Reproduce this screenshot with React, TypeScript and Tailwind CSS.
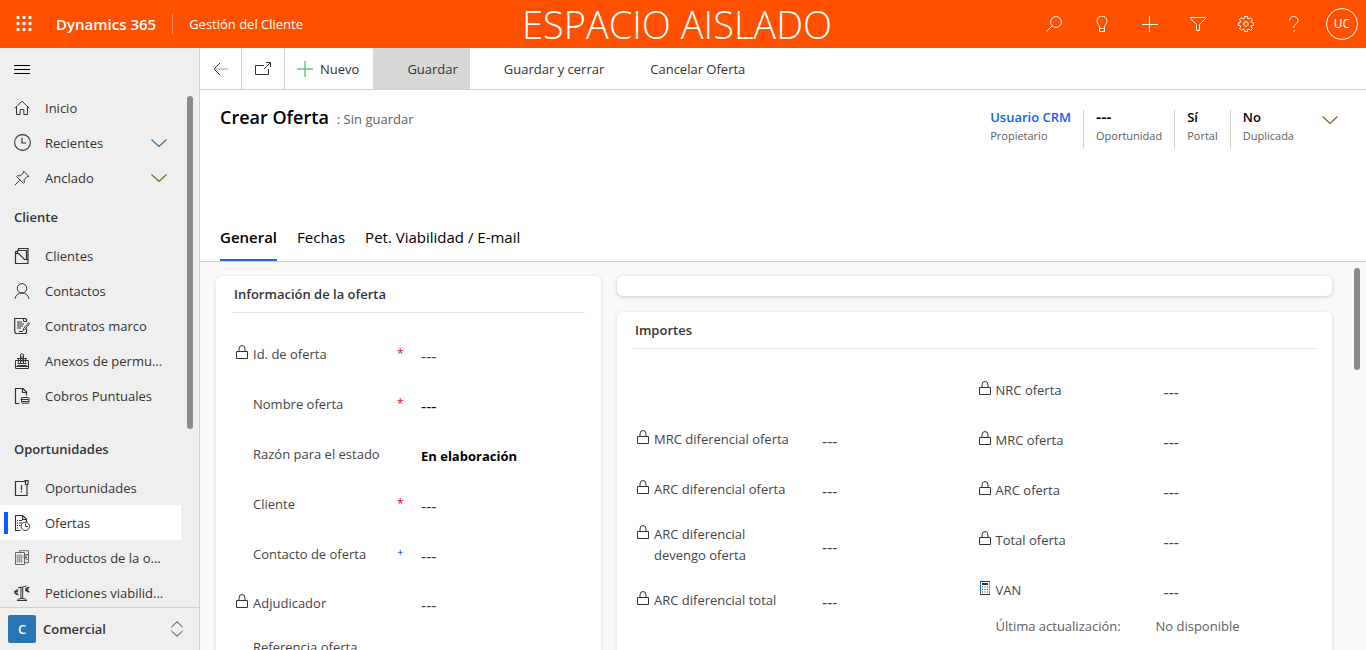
import React, { useId, useState } from "react";

type IconProps = { className?: string; children: React.ReactNode; box?: string };

function Svg({ className = "size-4", children, box = "0 0 16 16" }: IconProps) {
  return (
    <svg
      className={`${className} shrink-0`}
      viewBox={box}
      fill="none"
      stroke="currentColor"
      strokeWidth="1"
      aria-hidden="true"
    >
      {children}
    </svg>
  );
}

const Chevron = ({ className = "w-4 h-2" }: { className?: string }) => (
  <Svg className={className} box="0 0 16 8">
    <path d="M.5.5 8 7.500 15.500.5" strokeWidth="1.200" />
  </Svg>
);

const LockIcon = () => (
  <Svg className="h-[15px] w-3" box="0 0 12 15">
    <path d="M.5 6.500h11v7H.5z M3 6.500V4a3 3.500 0 0 1 6 0v2.500" />
  </Svg>
);

const CalculatorIcon = () => (
  <Svg className="h-[15px] w-3" box="0 0 12 15">
    <path d="M1.500 .5v13" stroke="#1479b8" />
    <path d="M10.500 .5v13" stroke="#c98a4b" />
    <path d="M1 .5h10M1 13.500h10" />
    <path d="M3 3h6" strokeWidth="2" />
    <path d="M3 6h1M5.500 6h1M8 6h1M3 8.500h1M5.500 8.500h1M8 8.500h1M3 11h1M5.500 11h1M8 11h1" strokeWidth="1" />
  </Svg>
);

const icons = {
  home: (
    <Svg>
      <path d="M.7 8.300 8 1.200l7.300 7.100M2.500 7v7.500h3.700V9.500h3.600v5h3.700V7" />
    </Svg>
  ),
  clock: (
    <Svg className="size-[17px]">
      <circle cx="8" cy="8" r="7.400" />
      <path d="M7.500 3.500v5h4" />
    </Svg>
  ),
  pin: (
    <Svg>
      <path d="M.8 15.200 5.700 10.300M9.700 1.200l5.100 5.100-1.700.4-3 3 .3 2.600-1 1L2.700 6.600l1-1 2.600.3 3-3z" />
    </Svg>
  ),
  folder: (
    <Svg>
      <path d="M1.500 5.500h3l6 6h3.500v4H1.500zM1.500 5.500v-2h1.500M3.500 5V2.500h9v9M4.500 2.500V.5h9.500v11" strokeWidth="1.200" />
    </Svg>
  ),
  person: (
    <Svg>
      <circle cx="8" cy="5.300" r="4.700" />
      <path d="M1 15.800C1.700 12 4.500 10 8 10s6.300 2 7 5.800" />
    </Svg>
  ),
  contract: (
    <Svg>
      <path d="M12.500 4V1.500l-1-1H.7v13l1 2h9.800l1-1v-4" strokeWidth="1.200" />
      <path d="M3 4h5M3 6h7M3 8h6M3 10h4M5 13.500h4M9.500.5v3h3" />
      <path d="m14.800 4.500-5.300 6-.5 1.800 1.700-.7 5-6.100z" />
    </Svg>
  ),
  annex: (
    <Svg>
      <path d="M1.500 7.500h13v8h-13z" />
      <path d="M4.500 9.500V5.500M11.500 9.500V5.500M6.500 10V1.500Q8 0 9.500 1.500V10M8 3v6M3.500 10.500h9M3.500 12.500h9" />
      <path d="M3 5.500h10M1.500 13.500h13" />
    </Svg>
  ),
  receipt: (
    <Svg>
      <path d="M5.500 15.500h-4V.5h7.500l3.500 3.500v3.500M8.500.5v4h4" strokeWidth="1.200" />
      <path d="M8 9.500h6.500M6.500 11.500h8M7 13.500h8M8 15.200h7M7.500 9.500v5M15 9.500v5" />
    </Svg>
  ),
  opportunity: (
    <Svg>
      <path d="M1.500 1.500h9.500v-1h3v4h-1v11H1.500zM11.500.5v4.500M7.500 5v5M7.500 11v1.300" strokeWidth="1.200" />
    </Svg>
  ),
  offer: (
    <Svg>
      <path d="M6.500 15.500h-5V.5h7l4 3.500v3M8.500.5v4h4" strokeWidth="1.200" />
      <path d="M3 5.500h1M5 5.500h3M3 8h1M5 8h3M3 10.500h1M5 10.500h1.500M3 13h1" />
      <circle cx="11.300" cy="11.300" r="4.200" fill="white" />
      <path d="M11.500 8.500v3H14" />
    </Svg>
  ),
  products: (
    <Svg className="size-4 text-[#666]">
      <path d="M1.500 2.500h9v12h-9zM5.500 2.500V.7h9v12h-4" />
      <path d="M3.500 4.500v8M5.500 4.500v8M7.500 4.500v8" strokeWidth="1.600" opacity=".6" />
      <path d="M14 4.500q-3.500-1-3.500 2t3.500 3M9.500 6h3.500M9.500 7.500h3.500" />
    </Svg>
  ),
  balance: (
    <Svg>
      <path d="M4 2.500q5 0 8.500-1.500M8.700 2v11.500M6.900 2v11.500M3 15.500q1-2 5-2t5 2z" />
      <path d="M4.500 5Q1.500 4.500 1.500 7.200t3 2.300M0 6.500h4M0 8h4M15.500 2.500q-3.200-.5-3.200 2t3.200 2.300M11 3.800h3.500M11 5.300h3.500" strokeWidth="1.200" />
    </Svg>
  ),
};

type NavEntry = { label: string; icon: keyof typeof icons; chevron?: string };

const topEntries: NavEntry[] = [
  { label: "Inicio", icon: "home" },
  { label: "Recientes", icon: "clock", chevron: "text-[#3573a3]" },
  { label: "Anclado", icon: "pin", chevron: "text-[#84612f]" },
];

const clientEntries: NavEntry[] = [
  { label: "Clientes", icon: "folder" },
  { label: "Contactos", icon: "person" },
  { label: "Contratos marco", icon: "contract" },
  { label: "Anexos de permu...", icon: "annex" },
  { label: "Cobros Puntuales", icon: "receipt" },
];

const opportunityEntries: NavEntry[] = [
  { label: "Oportunidades", icon: "opportunity" },
  { label: "Ofertas", icon: "offer" },
  { label: "Productos de la o...", icon: "products" },
  { label: "Peticiones viabilid...", icon: "balance" },
];

function NavList({ entries }: { entries: NavEntry[] }) {
  return (
    <ul>
      {entries.map(({ label, icon, chevron }) => {
        const active = label === "Ofertas";
        return (
          <li key={label}>
            <a
              href="#"
              aria-current={active ? "page" : undefined}
              className={`flex h-[35px] items-center pr-3.5 ${active ? "bg-white" : ""}`}
            >
              <span className={`ml-1 h-[22px] w-1 shrink-0 ${active ? "bg-[#0b5cff]" : ""}`} />
              <span className="ml-1.5 flex w-[31px] shrink-0 text-[#333]">{icons[icon]}</span>
              <span className="grow whitespace-nowrap">{label}</span>
              {chevron && (
                <span className={chevron}>
                  <Chevron />
                </span>
              )}
            </a>
          </li>
        );
      })}
    </ul>
  );
}

function Sidebar() {
  return (
    <aside className="flex w-[200px] shrink-0 flex-col border-r border-[#d2d0ce] bg-[#efefef] text-[#333]">
      <button type="button" aria-label="Menú" className="flex h-[42px] shrink-0 items-center pl-3.5 text-black">
        <Svg>
          <path d="M0 4.500h16M0 8.500h16M0 12.500h16" />
        </Svg>
      </button>
      <div className="flex min-h-0 grow">
        <nav className="w-[181px] overflow-hidden">
          <NavList entries={topEntries} />
          <h2 className="flex h-[43px] items-center pl-3.5 font-semibold">Cliente</h2>
          <NavList entries={clientEntries} />
          <h2 className="mt-3.5 flex h-[43px] items-center pl-3.5 font-semibold">Oportunidades</h2>
          <NavList entries={opportunityEntries} />
        </nav>
        <div className="ml-1.5 pt-1.5">
          <div className="h-[333px] w-1.5 rounded-full bg-[#8a8a8a]" />
        </div>
      </div>
      <button type="button" className="flex h-[43px] shrink-0 items-center border-t border-[#d2d0ce] pr-4 pl-2 font-semibold">
        <span className="flex size-7 items-center justify-center rounded-xs bg-[#2974b2] text-white">C</span>
        <span className="grow pl-[7px] text-left">Comercial</span>
        <Svg className="h-4 w-3" box="0 0 12 16">
          <path d="M.5 6 6 .7 11.500 6M.5 10 6 15.300 11.500 10" />
        </Svg>
      </button>
    </aside>
  );
}

const headerActions: { label: string; icon: React.ReactNode }[] = [
  { label: "Buscar", icon: <Svg><circle cx="10" cy="6" r="5.400" /><path d="M6.200 9.800.4 15.600" /></Svg> },
  {
    label: "Asistente",
    icon: (
      <Svg>
        <path d="M5.500 12.500V11Q5.500 9.500 4.200 8.300A5 5 0 1 1 11.800 8.300Q10.500 9.500 10.500 11v1.500zM5.500 12.500v3h5v-3" />
      </Svg>
    ),
  },
  { label: "Crear", icon: <Svg><path d="M7.500 0v16M0 8.500h16" /></Svg> },
  { label: "Filtro", icon: <Svg><path d="M.5 1.500h15v1L9.500 8.500v6h-3v-6l-6-6z" /></Svg> },
  {
    label: "Configuración",
    icon: (
      <Svg>
        <path d="M6.700.5h2.600l.4 2 1.200.5 1.700-1.200 1.800 1.800-1.200 1.700.5 1.200 1.900.4v2.400l-1.900.4-.5 1.200 1.200 1.700-1.800 1.800-1.700-1.200-1.200.5-.4 1.900H6.700l-.4-1.900-1.200-.5-1.700 1.200-1.800-1.800 1.200-1.700-.5-1.200-1.900-.4V6.900l1.900-.4.500-1.200-1.200-1.700 1.800-1.800L5.100 3l1.200-.5z" />
        <circle cx="8" cy="8" r="2.300" />
      </Svg>
    ),
  },
  {
    label: "Ayuda",
    icon: (
      <Svg>
        <path d="M3.500 4.500a4.300 4 0 1 1 6.800 3.200Q8 9.200 8 10.500v1.500M8 14v1.700" />
      </Svg>
    ),
  },
];

function TopBar() {
  return (
    <header className="flex h-12 shrink-0 items-center bg-[#ff5000] text-white">
      <div className="flex flex-1 items-center">
        <button type="button" aria-label="Iniciador de aplicaciones" className="flex size-12 items-center justify-center">
          <svg className="size-4" viewBox="0 0 16 16" fill="currentColor" aria-hidden="true">
            {[0, 6, 12].flatMap((y) => [0, 6, 12].map((x) => <rect key={`${x}-${y}`} x={x + 0.5} y={y} width="3" height="3" rx="1" />))}
          </svg>
        </button>
        <a href="#" className="border-r border-white/40 pr-4 pl-2 text-[15px] leading-5 font-semibold">
          Dynamics 365
        </a>
        <a href="#" className="pl-4">Gestión del Cliente</a>
      </div>
      <p className="pr-3 text-[38px] leading-12 font-light">ESPACIO AISLADO</p>
      <div className="flex flex-1 justify-end">
        {headerActions.map(({ label, icon }) => (
          <button key={label} type="button" aria-label={label} className="flex size-12 items-center justify-center">
            {icon}
          </button>
        ))}
        <button type="button" className="flex size-12 items-center justify-center">
          <span className="flex size-8 items-center justify-center rounded-full border border-white text-xs">UC</span>
        </button>
      </div>
    </header>
  );
}

function CommandBar() {
  return (
    <div className="flex h-[42px] shrink-0 border-b border-[#d2d0ce] text-[#333]">
      <button type="button" aria-label="Atrás" className="flex w-[42px] items-center justify-center border-r border-[#d2d0ce]">
        <Svg>
          <path d="M7 2 1 8l6 6" />
          <path d="M1.500 8h13.500" stroke="#a19fa8" />
        </Svg>
      </button>
      <button type="button" aria-label="Abrir en ventana nueva" className="flex w-[43px] items-center justify-center border-r border-[#d2d0ce]">
        <Svg>
          <path d="M9 4.500H.5v9h13V8M9 8l6-6M11 1.500h4.500V6" />
        </Svg>
      </button>
      <button type="button" className="flex items-center gap-[7px] pr-3.5 pl-3">
        <Svg className="size-4 text-[#6cc08b]">
          <path d="M8 0v16M0 8h16" strokeWidth="1.500" />
        </Svg>
        Nuevo
      </button>
      <button type="button" className="bg-[#d8d8d8] pr-3 pl-[34px]">Guardar</button>
      <button type="button" className="pr-3 pl-[34px]">Guardar y cerrar</button>
      <button type="button" className="pr-3 pl-[34px]">Cancelar Oferta</button>
    </div>
  );
}

const tabs = ["General", "Fechas", "Pet. Viabilidad / E-mail"];

function FormHeader() {
  const [selected, setSelected] = useState(tabs[0]);
  return (
    <div className="flex shrink-0 flex-col border-b border-[#d2d0ce] pl-5">
      <div className="flex h-[125px] items-start justify-between pt-5 pr-7">
        <div className="flex items-baseline gap-2 leading-[14px]">
          <h1 className="text-lg leading-[14px] font-semibold text-black">Crear Oferta</h1>
          <span className="text-[#605e5c]">: Sin guardar</span>
        </div>
        <div className="flex">
          <dl className="flex divide-x divide-[#d2d0ce] text-black">
            <HeaderField label="Propietario">
              <a href="#" className="text-[#1160f7]">Usuario CRM</a>
            </HeaderField>
            <HeaderField label="Oportunidad">---</HeaderField>
            <HeaderField label="Portal">Sí</HeaderField>
            <HeaderField label="Duplicada">No</HeaderField>
          </dl>
          <button type="button" aria-label="Más campos" className="ml-4 flex h-5 items-center text-[#84612f]">
            <Chevron />
          </button>
        </div>
      </div>
      <div role="tablist" className="flex gap-5 text-[15px] text-black">
        {tabs.map((tab) => (
          <button
            key={tab}
            type="button"
            role="tab"
            aria-selected={tab === selected}
            onClick={() => setSelected(tab)}
            className={`h-[46px] border-b-2 ${tab === selected ? "border-[#2266e3] font-semibold" : "border-transparent"}`}
          >
            {tab}
          </button>
        ))}
      </div>
    </div>
  );
}

function HeaderField({ label, children }: { label: string; children: React.ReactNode }) {
  return (
    <div className="flex flex-col-reverse px-3">
      <dt className="text-[11px] leading-6 text-[#605e5c]">{label}</dt>
      <dd className={`leading-[14px] font-semibold ${children === "---" ? "text-base leading-[14px]" : ""}`}>{children}</dd>
    </div>
  );
}

type FieldProps = {
  label: string;
  icon?: "lock" | "calculator";
  mark?: "required" | "recommended";
  value?: string;
  tone?: string;
  height?: string;
};

function Field({ label, icon, mark, value = "---", tone = "text-[#444]", height = "h-[50px]" }: FieldProps) {
  const id = useId();
  return (
    <div className={`flex items-center ${height}`}>
      <div className="flex w-[189px] shrink-0 pl-1">
        <span className="w-[17px] shrink-0 pt-px text-[#333]">
          {icon === "lock" && <LockIcon />}
          {icon === "calculator" && <CalculatorIcon />}
        </span>
        <label htmlFor={id} className="w-[144px] leading-[21px] text-[#444]">
          {label}
        </label>
        {mark === "required" && <span className="text-xs leading-5 text-red-600">*</span>}
        {mark === "recommended" && <span className="text-[11px] leading-4 text-[#1500ff]">+</span>}
      </div>
      <input
        id={id}
        readOnly
        defaultValue={value}
        className={`mt-1 min-w-0 grow bg-transparent outline-none ${value === "---" ? "text-base" : "font-bold"} ${tone}`}
      />
    </div>
  );
}

function Section({ title, children }: { title: string; children: React.ReactNode }) {
  return (
    <section className="rounded-md bg-white px-4 shadow-[0_1px_4px_rgba(0,0,0,0.14)]">
      <h2 className="flex h-[37px] items-center border-b border-[#e5e5e5] px-0.5 font-semibold text-[#333]">{title}</h2>
      <div className="pt-4">{children}</div>
    </section>
  );
}

function FormBody() {
  return (
    <div className="flex min-h-0 grow overflow-hidden bg-[#faf9f8]">
      <div className="grid min-w-0 grow grid-cols-[minmax(0,7fr)_minmax(0,13fr)] gap-4 pt-3.5 pl-4">
        <Section title="Información de la oferta">
          <Field label="Id. de oferta" icon="lock" mark="required" />
          <Field label="Nombre oferta" mark="required" tone="text-black" />
          <Field label="Razón para el estado" value="En elaboración" tone="text-black" />
          <Field label="Cliente" mark="required" tone="text-[#333]" />
          <Field label="Contacto de oferta" mark="recommended" tone="text-[#333]" />
          <Field label="Adjudicador" icon="lock" height="h-12" />
          <Field label="Referencia oferta" tone="text-[#333]" height="h-10" />
        </Section>
        <div className="flex flex-col gap-4">
          <section className="h-5 shrink-0 rounded-md bg-white shadow-[0_1px_4px_rgba(0,0,0,0.2)]" />
          <div className="shrink-0">
            <Section title="Importes">
              <div className="grid grid-cols-2">
                <div className="pt-[49px]">
                  <Field label="MRC diferencial oferta" icon="lock" />
                  <Field label="ARC diferencial oferta" icon="lock" />
                  <Field label="ARC diferencial devengo oferta" icon="lock" height="h-[61px]" />
                  <Field label="ARC diferencial total" icon="lock" />
                </div>
                <div>
                  <Field label="NRC oferta" icon="lock" />
                  <Field label="MRC oferta" icon="lock" />
                  <Field label="ARC oferta" icon="lock" />
                  <Field label="Total oferta" icon="lock" />
                  <Field label="VAN" icon="calculator" />
                  <div className="flex h-12 pl-[21px] leading-[22px] text-[#605e5c]">
                    <span className="w-40">Última actualización:</span>
                    <span>No disponible</span>
                  </div>
                </div>
              </div>
            </Section>
          </div>
        </div>
      </div>
      <div className="w-[34px] shrink-0 pt-1.5 pl-[22px]">
        <div className="h-[102px] w-1.5 rounded-full bg-[#8a8a8a]" />
      </div>
    </div>
  );
}

export default function App() {
  return (
    <div className="flex h-screen flex-col overflow-hidden bg-white font-['Open_Sans','Noto_Sans',sans-serif] text-[13px] leading-5">
      <TopBar />
      <div className="flex min-h-0 grow">
        <Sidebar />
        <main className="flex min-w-0 grow flex-col">
          <CommandBar />
          <FormHeader />
          <FormBody />
        </main>
      </div>
    </div>
  );
}
